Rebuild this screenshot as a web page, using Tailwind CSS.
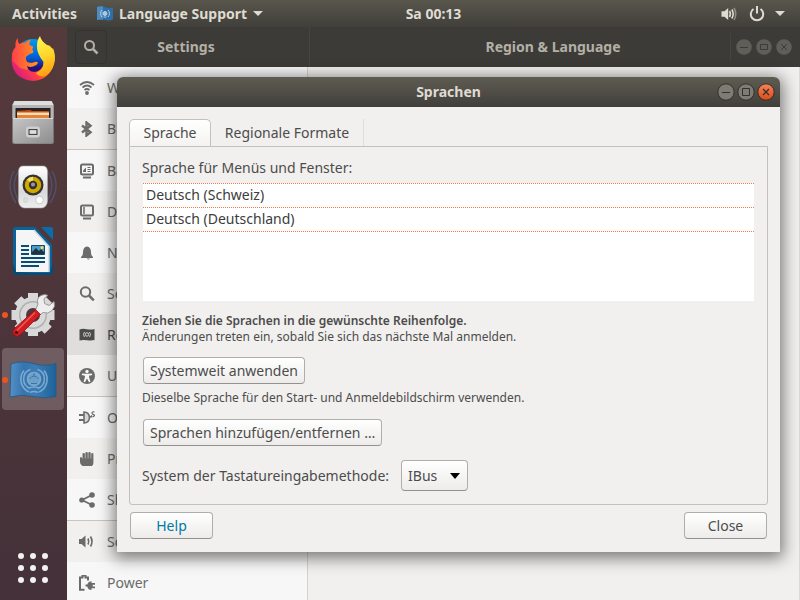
<!DOCTYPE html>
<html lang="de">
<head>
<meta charset="utf-8">
<meta name="viewport" content="width=device-width, initial-scale=1">
<title>Sprachen</title>
<script src="https://cdn.jsdelivr.net/npm/@tailwindcss/browser@4"></script>
</head>
<body class="relative flex h-screen flex-col overflow-hidden bg-[#f1f0ee] font-['Noto_Sans','Open_Sans',sans-serif] text-sm text-[#4c4c4c]">

<!-- Top bar -->
<header class="grid h-[27px] shrink-0 grid-cols-[1fr_auto_1fr] items-center bg-linear-to-b from-[#59564c] to-[#403f3a] px-3 font-bold text-[#dfdbd2]">
  <div class="flex items-center gap-5">
    <button type="button">Activities</button>
    <button type="button" class="flex items-center gap-1.5 whitespace-nowrap">
      <svg class="size-4" viewBox="0 0 16 16" aria-hidden="true">
        <path d="M0 1q4-1.500 8 0t8 .5v12q-4 1.500-8 .5t-8 0z" fill="#2d6fa6"/>
        <path d="M0 1q3-1 6-.5v13.300q-3-.5-6 .2z" fill="#4d8cc0"/>
        <g fill="none" stroke="#b9d2e6"><circle cx="8" cy="7.500" r="2" fill="#a9c7de"/><path d="M5 4a5 5 0 0 0 0 7M11 4a5 5 0 0 1 0 7M6.500 11h3"/></g>
      </svg>
      <span>Language Support</span>
      <svg class="h-[5px] w-[10px]" viewBox="0 0 10 5" fill="currentColor" aria-hidden="true"><path d="M0 0h10L5 5z"/></svg>
    </button>
  </div>
  <!-- The clock is centred on the area beside the dock -->
  <time class="pl-[67px] text-center">Sa 00:13</time>
  <button type="button" class="flex items-center gap-[10px] justify-self-end pr-[3px]" aria-label="System menu">
    <svg class="h-4 w-5" viewBox="0 0 16 16" fill="none" stroke="currentColor" stroke-width="1.600" aria-hidden="true"><path d="M.5 5.200h3L7.200 2v12l-3.700-3.200h-3z" fill="currentColor" stroke="none"/><path d="M8.500 5q1.800 3 0 6M10.800 3.500q2.800 4.500 0 9"/><path d="M13 2q3.500 6 0 12" opacity=".45"/></svg>
    <svg class="h-4 w-4" viewBox="0 0 16 16" fill="none" stroke="currentColor" stroke-width="2" aria-hidden="true"><path d="M4.500 3a6.200 6.200 0 1 0 7 0M8 0v7.500"/></svg>
    <svg class="h-[5px] w-[10px]" viewBox="0 0 10 5" fill="currentColor" aria-hidden="true"><path d="M0 0h10L5 5z"/></svg>
  </button>
</header>

<div class="flex min-h-0 flex-1">
  <!-- Dock -->
  <nav aria-label="Dock" class="flex w-[67px] shrink-0 flex-col justify-between bg-linear-to-b from-[#553a3b] to-[#443139] pr-px">
    <div class="flex flex-col">
      <button type="button" aria-label="Firefox" class="flex h-16 items-center justify-center">
        <svg class="size-12" viewBox="0 0 48 48">
          <defs>
            <linearGradient id="ffBody" x1=".9" y1=".2" x2=".1" y2=".7"><stop offset="0" stop-color="#ffe226"/><stop offset=".3" stop-color="#ff980e"/><stop offset=".65" stop-color="#ff3f45"/><stop offset="1" stop-color="#e01f7c"/></linearGradient>
            <linearGradient id="ffFace" x1="0" y1="0" x2="1" y2="0"><stop offset="0" stop-color="#ff3f4b"/><stop offset="1" stop-color="#ff9a1a"/></linearGradient>
            <linearGradient id="ffGlobe" x1=".5" y1="0" x2=".5" y2="1"><stop offset="0" stop-color="#009be8"/><stop offset=".5" stop-color="#0060d8"/><stop offset=".8" stop-color="#25107a"/></linearGradient>
            <linearGradient id="ffTail" x1=".4" y1="0" x2=".6" y2="1"><stop offset="0" stop-color="#fff44f"/><stop offset=".5" stop-color="#ffd52a"/><stop offset="1" stop-color="#ff9a12"/></linearGradient>
          </defs>
          <circle cx="24" cy="22" r="18" fill="url(#ffGlobe)"/>
          <path d="M3.500 18Q8 10 14 14l3 14q1 9 9 9 8-2 9-10L44 13q3 8 1 16-5 16-21 17Q4 44 2.600 26z" fill="url(#ffBody)"/>
          <path d="M8.500 3q0 4 2 6 3-1.700 6-1.400Q18.500 5 22 4.500q-2 2-1.500 5.500l4 1.700q-1.500 1.300-1 3l1 2.300q-.5 1.500-3.500 1.800l-4 3q-1 2 1 5 3 2 7.500.2 2.500-1 3.500 1-1.500 3-5 3.500-3 1-6-.5l1 4-8-2L3 25q-1-8 3.500-13-.5-6 2-9z" fill="url(#ffFace)"/>
          <path d="M31 1q1 5 7 9 1 0 3 1l2.500 3Q47 20 45 29q-2 8-9 12-6 1-9-3 8-3 7.500-11-7-9-6.500-16Q28 5 31 1z" fill="url(#ffTail)"/>
        </svg>
      </button>
      <button type="button" aria-label="Files" class="flex h-16 items-center justify-center">
        <svg class="size-12" viewBox="0 0 48 48">
          <defs><linearGradient id="cab" x1="0" y1="0" x2="1" y2="1"><stop offset="0" stop-color="#c5c5c5"/><stop offset="1" stop-color="#8d8d8d"/></linearGradient></defs>
          <path d="M5 2h38l2 4v37q0 2-2 2H5q-2 0-2-2V6z" fill="#777"/>
          <path d="M5.500 2h37l2 4h-41z" fill="#dedede"/><path d="M3.500 6h41v13h-41z" fill="#b5b5b5"/>
          <path d="M6.500 9h35v11h-35z" fill="#242424"/><path d="M8 12l13-1 2 1h17v8H8z" fill="#cc4c15"/><path d="M8 13.500h32v3H8z" fill="#ffe0b5"/><path d="M8 16h32v4H8z" fill="#e88335"/>
          <path d="M4 19.500h40v23q0 2-2 2H6q-2 0-2-2z" fill="url(#cab)"/><path d="M4 19.500h40" stroke="#ddd"/>
          <rect x="18" y="28.500" width="12" height="9" rx="2" fill="#eee" stroke="#cfcfcf" stroke-width="2"/><rect x="20" y="30.500" width="8" height="5" fill="#ddd" stroke="#444" stroke-width="1.200"/>
        </svg>
      </button>
      <button type="button" aria-label="Rhythmbox" class="flex h-16 items-center justify-center">
        <svg class="size-12" viewBox="0 0 48 48">
          <defs><linearGradient id="spk" x1="0" y1="0" x2="0" y2="1"><stop offset="0" stop-color="#fff"/><stop offset=".6" stop-color="#d9d9d9"/><stop offset="1" stop-color="#eee"/></linearGradient></defs>
          <g fill="none" stroke="#4f6496" stroke-width="1.500" opacity=".55"><path d="M5 8q-9 16 2 32M9 9q-8 14 1 29M43 8q9 16-2 32M39 9q8 14-1 29"/></g>
          <path d="M14 3h20q4 0 4.500 5v30q-.5 6-5.500 7H15q-5-1-5.500-7V8Q10 3 14 3z" fill="url(#spk)" stroke="#aaa" stroke-width=".6"/>
          <circle cx="24" cy="22" r="10.500" fill="#333"/><circle cx="24" cy="22" r="8.200" fill="#d1a800"/><path d="M24 22l-6-5.500a8 8 0 0 1 6-2.700z" fill="#f4df68"/><circle cx="24" cy="22" r="4.200" fill="#333"/><circle cx="24" cy="21.500" r="2" fill="#999"/>
          <circle cx="30.500" cy="37" r="3.800" fill="#fff" stroke="#c9c9c9"/><path d="M15 35h3v4h-3z" fill="none" stroke="#ccc"/>
        </svg>
      </button>
      <button type="button" aria-label="LibreOffice Writer" class="flex h-16 items-center justify-center">
        <svg class="size-12" viewBox="0 0 48 48">
          <path d="M7 0h19l17 18v26q0 4-4 4H8q-4 0-4-4V3q0-3 3-3z" fill="#07639a"/><path d="M24 46h17l3-10v8q0 4-4 4H8q-4 0-4-4v-8l3 9z" fill="#064a75"/>
          <path d="M32 0h10q2 0 2 2v11z" fill="#0b6ca8"/>
          <path d="M7 3h18l15 16.500V45H7z" fill="#f5f5f5"/><path d="M25 3l15 16.500V45" fill="none" stroke="#cfd5da" stroke-width="1.500"/>
          <g fill="#084c78"><path d="M12 18h8v2h-8zM12 22h8v2h-8zM12 26h8v2h-8zM12 30h24v2H12zM12 34h24v2H12zM12 38h18v2H12z"/></g>
          <path d="M22.500 18.500h13v9h-13z" fill="#4d9bcb" stroke="#084c78"/><path d="M23 27v-2l4-4 3 3 2-2 3 3v2z" fill="#20323e"/><circle cx="33" cy="20.500" r="1.500" fill="#ffd83f"/>
        </svg>
      </button>
      <button type="button" aria-label="Settings" class="relative flex h-16 items-center justify-center">
        <span class="absolute left-[2px] size-[6px] rounded-full bg-[#e95420]"></span>
        <svg class="size-12" viewBox="0 0 48 48">
          <g fill="#d8d8d8">
            <path d="M19 2h10v8H19zM19 38h10v7H19zM2.500 19H10v10H2.500zM38 19h7.500v10H38z"/>
            <path d="M19 2h10v8H19zM19 38h10v7H19zM2.500 19H10v10H2.500zM38 19h7.500v10H38z" transform="rotate(45 24 24)"/>
            <circle cx="24" cy="24" r="18"/>
          </g>
          <circle cx="24" cy="24" r="14" fill="#b0b0b0"/><circle cx="24" cy="24" r="12.500" fill="#d9d9d9"/><circle cx="24" cy="24" r="7" fill="#53373e"/>
          <path d="M29 13Q27 7 32 4.500q4-2 7 0l-4 3 .5 5 4.500 2 5-4q2 5-2 9t-9 2l-4 3-4-4z" fill="#eee" stroke="#888" stroke-width=".8"/>
          <path d="M26.500 18.500l5 5L11 44q-3 3-6 0t0-6z" fill="#d01d20" stroke="#8c1014" stroke-width=".8"/><path d="M26 21.500L8 39.500" stroke="#f05a55" stroke-width="1.500"/><circle cx="7.500" cy="41.500" r="1.600" fill="#4a1014"/>
        </svg>
      </button>
      <button type="button" aria-label="Language Support" class="relative flex h-16 items-center justify-center pt-px">
        <span class="absolute inset-x-[2px] inset-y-px rounded bg-white/20"></span>
        <span class="absolute left-[2px] size-[6px] rounded-full bg-[#e95420]"></span>
        <svg class="relative size-12" viewBox="0 0 48 48">
          <defs><linearGradient id="flg"><stop offset="0" stop-color="#5590c6"/><stop offset=".3" stop-color="#3574ae"/><stop offset=".55" stop-color="#3d7db5"/><stop offset="1" stop-color="#1e6199"/></linearGradient></defs>
          <path d="M2 8q10-4 22-.5t23 0v33q-11 2.500-23 0T1 41z" fill="url(#flg)" stroke="#225985" stroke-width=".8"/>
          <g fill="none" stroke="#7ba9cf" stroke-width="1.600">
            <circle cx="25" cy="23" r="6.500" fill="#6d9fc8"/><path d="M21.500 13.500a10 10 0 0 0 0 19M28.500 13.500a10 10 0 0 1 0 19M15 14.500a14 14 0 0 0 5 21.500M35 14.500a14 14 0 0 1-5 21.500M19 32.500q6-3 12 0M21 36.500q4-2 8 0"/>
          </g>
          <path d="M20.500 23q4.500-6 9 0M22 27.500h6M25 17v3" fill="none" stroke="#3975aa"/>
        </svg>
      </button>
    </div>
    <button type="button" aria-label="Show Applications" class="flex h-16 items-center justify-center">
      <svg class="size-8" viewBox="0 0 32 32" fill="#f2f2f2"><circle cx="4" cy="4" r="3"/><circle cx="16" cy="4" r="3"/><circle cx="28" cy="4" r="3"/><circle cx="4" cy="16" r="3"/><circle cx="16" cy="16" r="3"/><circle cx="28" cy="16" r="3"/><circle cx="4" cy="28" r="3"/><circle cx="16" cy="28" r="3"/><circle cx="28" cy="28" r="3"/></svg>
    </button>
  </nav>

  <!-- Settings window -->
  <main class="flex min-w-0 flex-1 flex-col">
    <div class="flex h-10 shrink-0 items-center bg-[#3c3b37] font-bold text-[#b3b0a6]">
      <div class="flex w-[243px] shrink-0 items-center border-r border-[#45443f] py-[3px] pl-2">
        <button type="button" aria-label="Search" class="flex h-[34px] w-8 items-center justify-center rounded border border-[#34332f]">
          <svg class="size-4" viewBox="0 0 16 16" fill="none" stroke="currentColor" stroke-width="2" aria-hidden="true"><circle cx="6.500" cy="6.500" r="4.500"/><path d="M10 10l4.500 4.500" stroke-width="2.500"/></svg>
        </button>
        <h1 class="flex-1 pr-11 text-center">Settings</h1>
      </div>
      <div class="grid flex-1 grid-cols-[1fr_auto_1fr] items-center pr-2">
        <h2 class="col-start-2 pl-1">Region &amp; Language</h2>
        <div class="flex h-7 items-center gap-1 justify-self-end border-l border-[#45443f] pl-[5px]">
          <button type="button" aria-label="Minimize"><svg class="size-4" viewBox="0 0 16 16" fill="none" stroke="#3c3b37"><circle cx="8" cy="8" r="7.800" fill="#605e58" stroke="none"/><path d="M4 8.500h8"/></svg></button>
          <button type="button" aria-label="Maximize"><svg class="size-4" viewBox="0 0 16 16" fill="none" stroke="#3c3b37"><circle cx="8" cy="8" r="7.800" fill="#605e58" stroke="none"/><path d="M4.500 5.500h7v5h-7z"/></svg></button>
          <button type="button" aria-label="Close window"><svg class="size-4" viewBox="0 0 16 16" fill="none" stroke="#3c3b37"><circle cx="8" cy="8" r="7.800" fill="#605e58" stroke="none"/><path d="M5 5l6 6M11 5l-6 6"/></svg></button>
        </div>
      </div>
    </div>
    <div class="flex min-h-0 flex-1">
      <nav aria-label="Settings" class="flex w-[241px] shrink-0 flex-col overflow-hidden border-r border-[#d4d2cf] text-[#6b6b6b]">
        <a href="#wifi" class="flex h-[41px] shrink-0 items-center gap-3 bg-[#f7f7f7] px-3"><svg class="size-4" viewBox="0 0 16 16" fill="none" stroke="currentColor" stroke-width="1.700"><path d="M1 5q7-6 14 0M3.500 7.500q4.500-4 9 0M5.500 10q2.500-2 5 0"/><circle cx="8" cy="13" r="1.900" fill="currentColor" stroke="none"/></svg>Wi-Fi</a>
        <a href="#bluetooth" class="flex h-[41px] shrink-0 items-center gap-3 bg-[#f1f0ee] px-3"><svg class="size-4" viewBox="0 0 16 16" fill="none" stroke="currentColor" stroke-width="2.400"><path d="M3 4.500l8.500 6.800L7.500 14.500v-13l4 3.200L3 11.500"/></svg>Bluetooth</a>
        <a href="#background" class="flex h-[42px] shrink-0 items-center gap-3 border-t border-[#c9c4c0] bg-[#f7f7f7] px-3"><svg class="size-4" viewBox="0 0 16 16" fill="none" stroke="currentColor" stroke-width="2"><rect x="2" y="1.500" width="12" height="10" rx="1.500"/><path d="M4 14.500h8"/><path d="M4 9V7.500l3-3V9z" fill="currentColor" stroke="none"/><path d="M8.500 4.500h3M8.500 6.500h3M8.500 8.500h3" stroke-width="1"/></svg>Background</a>
        <a href="#dock" class="flex h-[41px] shrink-0 items-center gap-3 bg-[#f1f0ee] px-3"><svg class="size-4" viewBox="0 0 16 16" fill="none" stroke="currentColor" stroke-width="2"><rect x="2" y="1.500" width="12" height="10" rx="1.500"/><path d="M4 14.500h8"/><path d="M5 3v7" stroke-width="1.500"/></svg>Dock</a>
        <a href="#notifications" class="flex h-[41px] shrink-0 items-center gap-3 bg-[#f7f7f7] px-3"><svg class="size-4" viewBox="0 0 16 16" fill="currentColor"><path d="M8 1.500q4 .5 4 6 0 3 2 4.500v1H2v-1q2-1.500 2-4.500 0-5.500 4-6zM7.500 13.500H11q-1.500 2-3.500 0z"/></svg>Notifications</a>
        <a href="#search" class="flex h-[41px] shrink-0 items-center gap-3 bg-[#f1f0ee] px-3"><svg class="size-4" viewBox="0 0 16 16" fill="none" stroke="currentColor" stroke-width="2"><circle cx="6.500" cy="6" r="4.700"/><path d="M10 9.500l4.800 4.800" stroke-width="2.500"/></svg>Search</a>
        <a href="#region" aria-current="page" class="flex h-[41px] shrink-0 items-center gap-3 bg-[#dfdedc] px-3 text-[#4c4c4c]"><svg class="size-4" viewBox="0 0 16 16"><path d="M.5 2.500q3-1.200 7.500-.3t7.500-.2v11q-3 .8-7.500.2t-7.500.3z" fill="currentColor"/><g fill="none" stroke="#dfdedc" stroke-width=".9"><circle cx="8" cy="7.500" r="1.700"/><path d="M5.500 5q-2 2.500 0 5M10.500 5q2 2.500 0 5"/></g></svg>Region &amp; Language</a>
        <a href="#universal" class="flex h-[41px] shrink-0 items-center gap-3 bg-[#f1f0ee] px-3"><svg class="size-4" viewBox="0 0 16 16"><circle cx="8" cy="8" r="8" fill="currentColor"/><g fill="#f7f7f7"><circle cx="8" cy="3.500" r="1.700"/><path d="M3 5.500l3.500.3h3l3.500-.3.200 1.500-3.200.8.200 2 1.300 4-1.500.4L8 10.500l-2 3.700-1.500-.4 1.300-4 .2-2L2.800 7z"/></g></svg>Universal Access</a>
        <a href="#online" class="flex h-[42px] shrink-0 items-center gap-3 border-t border-[#c9c4c0] bg-[#f7f7f7] px-3"><svg class="size-4" viewBox="0 0 16 16" fill="none" stroke="currentColor" stroke-width="1.600"><path d="M5 2q5 0 5.500 5.500Q10 13 5 13z" fill="#d5d5d5"/><path d="M0 5h5M0 10h5" stroke-width="2"/><path d="M10.500 7.500l2-1.500v1.500M15.500 2q-2.500-.5-2.500 1t2 1.800-1.500 2.200" stroke-width="1.200"/></svg>Online Accounts</a>
        <a href="#privacy" class="flex h-[41px] shrink-0 items-center gap-3 bg-[#f1f0ee] px-3"><svg class="size-4" viewBox="0 0 16 16" fill="currentColor"><path d="M1 6.500q1.500-1 2 .5l.5 1V2.500q1.200-1.200 2.400 0V7.500h.5v-6q1.200-1.200 2.400 0v6h.5v-6q1.200-1.200 2.400 0v6h.5v-5q1.100-1 2.200 0V12q0 2-1.500 3h-9.500Q1 13.500 1 11z"/></svg>Privacy</a>
        <a href="#sharing" class="flex h-[41px] shrink-0 items-center gap-3 bg-[#f7f7f7] px-3"><svg class="size-4" viewBox="0 0 16 16" fill="currentColor"><path d="M13 3L3 8l10 5" fill="none" stroke="currentColor" stroke-width="1.800"/><circle cx="2.800" cy="8" r="2.600"/><circle cx="13" cy="3" r="2.800"/><circle cx="13" cy="13" r="2.800"/></svg>Sharing</a>
        <a href="#sound" class="flex h-[42px] shrink-0 items-center gap-3 border-t border-[#c9c4c0] bg-[#f1f0ee] px-3"><svg class="size-4" viewBox="0 0 16 16" fill="none" stroke="currentColor" stroke-width="1.700"><path d="M0 5h2.500L6.500 1.500v12l-4-3.500H0z" fill="currentColor" stroke="none"/><path d="M9 4.500q1.500 3 0 6M11.500 2.500q3 5 0 10"/></svg>Sound</a>
        <a href="#power" class="flex h-[41px] shrink-0 items-center gap-3 bg-[#f7f7f7] px-3"><svg class="size-4" viewBox="0 0 16 16" fill="none" stroke="currentColor" stroke-width="2"><path d="M5.500 14.800H1V2.500h2.500V.5h3v2H9V5.500"/><path d="M6.500 9.500h1.800Q9.500 6.200 12.500 6.200V8H16v1.800h-2.300v1.700H16v1.800h-3.500V15q-3.500 0-4.200-3.500H6.500z" fill="currentColor" stroke="none"/></svg>Power</a>
      </nav>
      <div class="flex-1 border-r border-[#dcdad7] bg-[#f1f0ee]"></div>
    </div>
  </main>
</div>

<!-- Languages dialog -->
<section role="dialog" aria-labelledby="dialog-title" class="absolute top-[77px] right-5 left-[117px] rounded-t-md bg-[#f1f0ee] shadow-[0_3px_16px_3px_rgba(0,0,0,0.5)]">
  <div class="grid h-[30px] grid-cols-[1fr_auto_1fr] items-center rounded-t-md bg-linear-to-b from-[#5f5c52] to-[#403f3a] px-[5px] font-bold text-[#dfdbd2]">
    <h2 id="dialog-title" class="col-start-2 leading-5">Sprachen</h2>
    <div class="flex items-center gap-0.5 justify-self-end">
      <button type="button" aria-label="Minimieren"><svg class="size-[18px]" viewBox="0 0 18 18" fill="none" stroke="#32312d"><circle cx="9" cy="9" r="8.200" fill="#7d7b73"/><path d="M5 9.500h8"/></svg></button>
      <button type="button" aria-label="Maximieren"><svg class="size-[18px]" viewBox="0 0 18 18" fill="none" stroke="#32312d"><circle cx="9" cy="9" r="8.200" fill="#7d7b73"/><path d="M5.500 5.500h7v7h-7z"/></svg></button>
      <button type="button" aria-label="Fenster schließen"><svg class="size-[18px]" viewBox="0 0 18 18" fill="none" stroke="#32312d"><defs><linearGradient id="cls" x1="0" y1="0" x2="0" y2="1"><stop offset="0" stop-color="#f4845a"/><stop offset="1" stop-color="#df4a16"/></linearGradient></defs><circle cx="9" cy="9" r="8.200" fill="url(#cls)"/><path d="M6 6l6 6M12 6l-6 6" stroke-width="1.300"/></svg></button>
    </div>
  </div>

  <div class="px-3 pt-3 pb-[13px]">
    <div role="tablist" class="flex h-[27px]">
      <button type="button" role="tab" aria-selected="true" class="w-[82px] rounded-t-[5px] border border-b-0 border-[#c3c1be] bg-linear-to-b from-white to-[#f4f3f2]">Sprache</button>
      <button type="button" role="tab" aria-selected="false" class="w-[153px] border-r border-[#dfdddb]">Regionale Formate</button>
    </div>
    <div role="tabpanel" class="rounded-b-[3px] border border-[#c3c1be] px-3 pt-[11px] pb-[13px]">
      <p class="mb-[5px] leading-5">Sprache für Menüs und Fenster:</p>
      <ul class="mx-px h-[118px] bg-white text-[#3c3c3c]">
        <li class="h-6 border-t border-dotted border-[#f07746] px-[3px] leading-[21px]">Deutsch (Schweiz)</li>
        <li class="h-[25px] border-y border-dotted border-[#f07746] px-[3px] leading-[21px]">Deutsch (Deutschland)</li>
      </ul>
      <p class="mt-3 text-xs leading-4"><b class="font-semibold">Ziehen Sie die Sprachen in die gewünschte Reihenfolge.</b><br>Änderungen treten ein, sobald Sie sich das nächste Mal anmelden.</p>
      <button type="button" class="mx-px mt-3 block h-[27px] rounded border border-[#b0aeab] border-b-[#94928f] bg-linear-to-b from-white to-[#edecea] px-1.5 whitespace-nowrap">Systemweit anwenden</button>
      <p class="mt-1.5 text-xs leading-4">Dieselbe Sprache für den Start- und Anmeldebildschirm verwenden.</p>
      <button type="button" class="mx-px mt-[13px] block h-[27px] rounded border border-[#b0aeab] border-b-[#94928f] bg-linear-to-b from-white to-[#edecea] px-1.5 whitespace-nowrap">Sprachen hinzufügen/entfernen …</button>
      <div class="mt-[14px] flex items-center gap-3">
        <label for="im">System der Tastatureingabemethode:</label>
        <div class="relative">
          <select id="im" class="h-[31px] w-[67px] appearance-none rounded border border-[#b0aeab] border-b-[#94928f] bg-linear-to-b from-white to-[#edecea] pl-1.5">
            <option selected>IBus</option>
          </select>
          <svg class="pointer-events-none absolute top-[13px] right-2 h-[6px] w-[10px]" viewBox="0 0 10 6" aria-hidden="true"><path d="M0 0h10L5 6z" fill="#000"/></svg>
        </div>
      </div>
    </div>
    <div class="mx-px mt-[7px] flex justify-between">
      <button type="button" class="h-[27px] w-[83px] rounded border border-[#b0aeab] border-b-[#94928f] bg-linear-to-b from-white to-[#edecea] text-[#007aa6]">Help</button>
      <button type="button" class="h-[27px] w-[83px] rounded border border-[#b0aeab] border-b-[#94928f] bg-linear-to-b from-white to-[#edecea]">Close</button>
    </div>
  </div>
</section>
</body>
</html>
